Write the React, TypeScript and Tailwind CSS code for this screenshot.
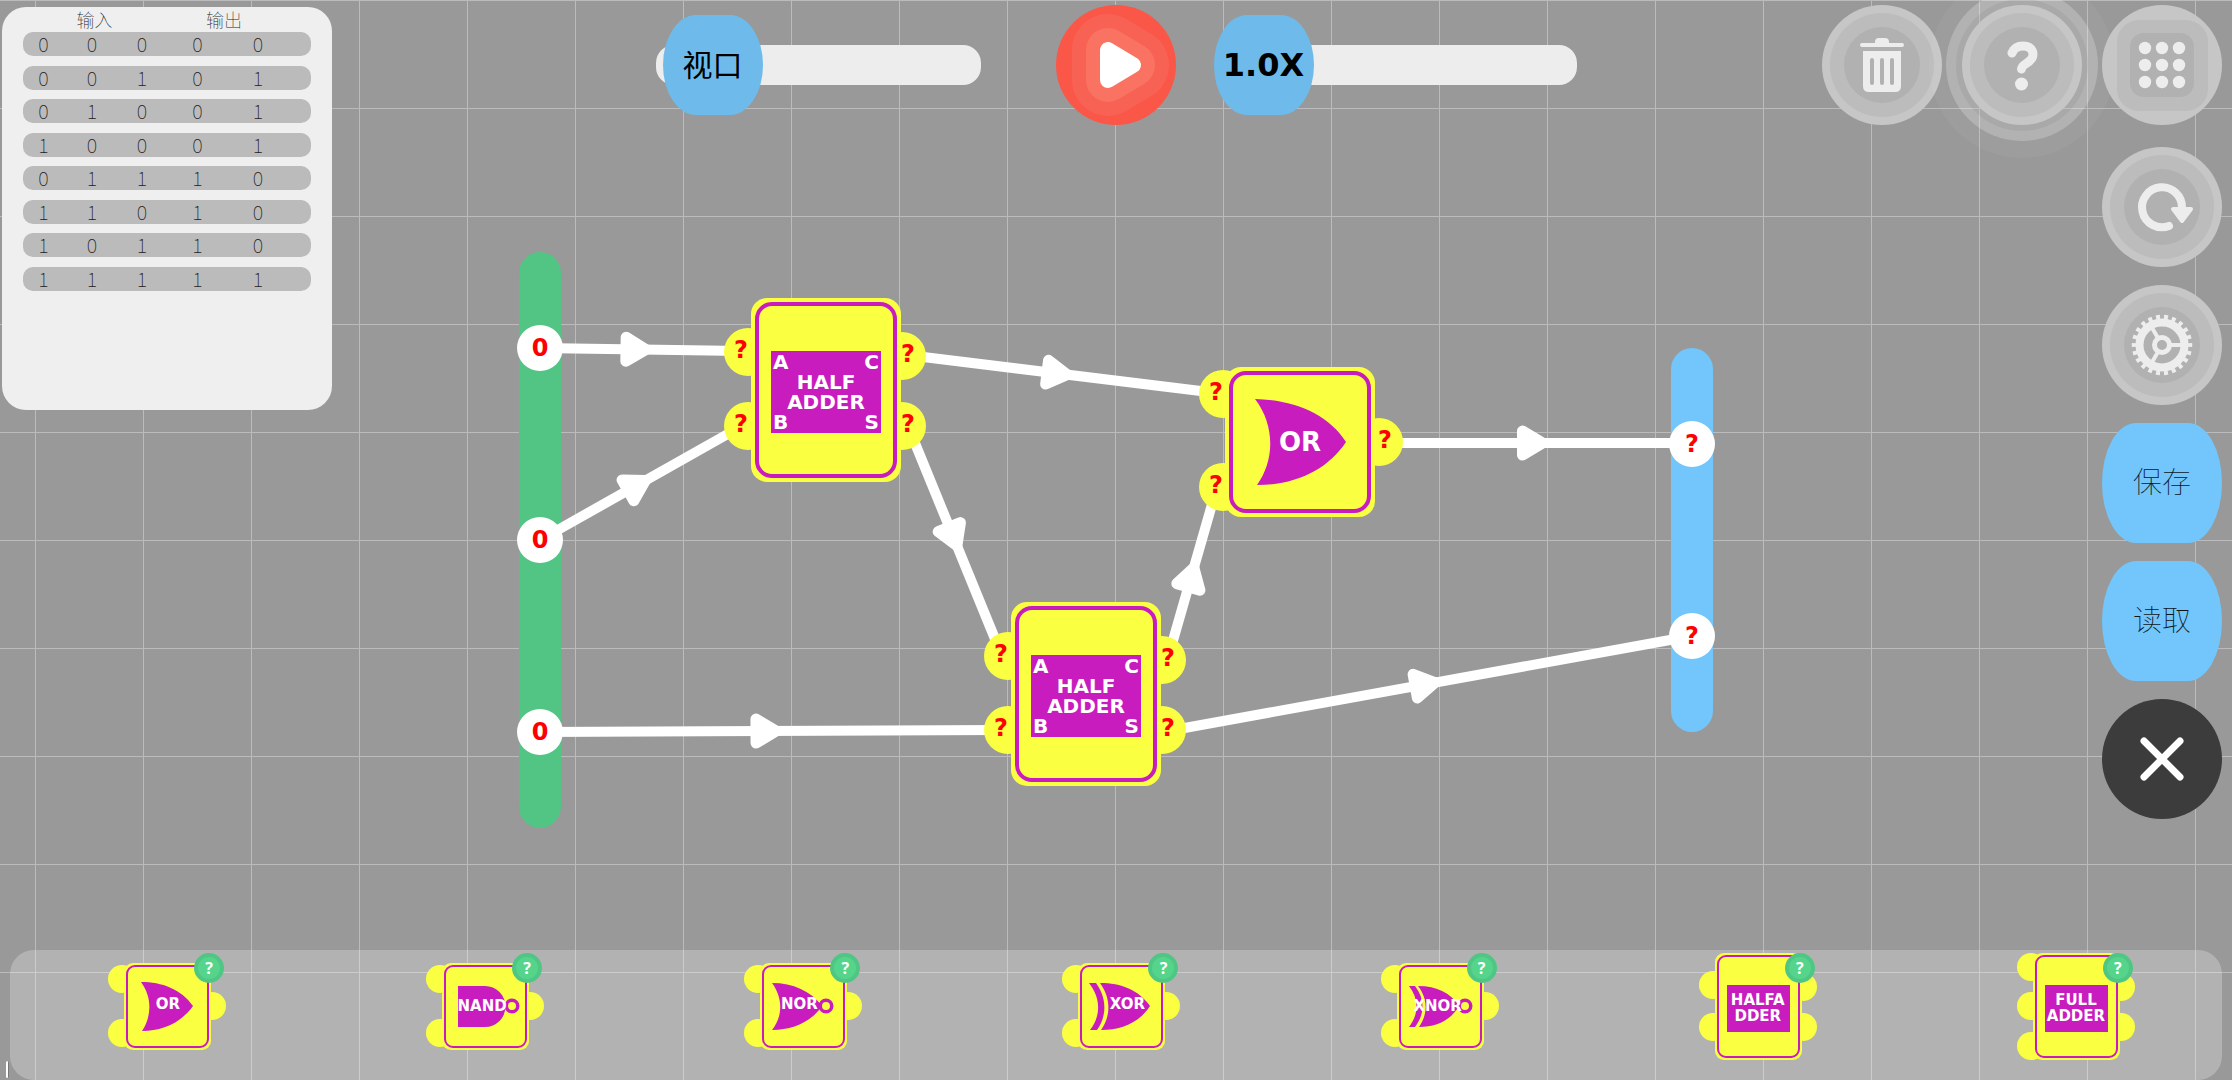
import React from "react";

const DISPLAY = "font-['DejaVu_Sans',sans-serif] font-bold";
const CJK = "font-['Noto_Sans_CJK_SC',sans-serif]";

/* ---------- truth table ---------- */

const TRUTH_ROWS = [
  [0, 0, 0, 0, 0],
  [0, 0, 1, 0, 1],
  [0, 1, 0, 0, 1],
  [1, 0, 0, 0, 1],
  [0, 1, 1, 1, 0],
  [1, 1, 0, 1, 0],
  [1, 0, 1, 1, 0],
  [1, 1, 1, 1, 1],
];
const COLUMN_WIDTHS = ["w-[41px]", "w-14", "w-11", "w-[67px]", "w-[54px]"];

function TruthTable() {
  return (
    <section className={`ml-0.5 mt-[7px] h-[403px] w-[330px] rounded-[24px] bg-[#efefef] px-[21px] ${CJK}`}>
      <table className="block text-[#1c1c1c]">
        <thead className="block">
          <tr className="flex h-[25px] text-lg leading-6">
            <th colSpan={3} className="w-[143px] text-center font-thin">输入</th>
            <th colSpan={2} className="w-[116px] text-center font-thin">输出</th>
          </tr>
        </thead>
        <tbody className="flex h-[259px] flex-col justify-between">
          {TRUTH_ROWS.map((row, r) => (
            <tr key={r} className="flex h-6 rounded-[10px] bg-[#bbbbbb] text-xl leading-6">
              {row.map((bit, c) => (
                <td key={c} className={`${COLUMN_WIDTHS[c]} text-center font-thin`}>{bit}</td>
              ))}
            </tr>
          ))}
        </tbody>
      </table>
    </section>
  );
}

/* ---------- sliders and round buttons ---------- */

const THUMB =
  "relative h-[100px] w-full appearance-none bg-transparent [&::-webkit-slider-thumb]:size-[100px] [&::-webkit-slider-thumb]:appearance-none [&::-webkit-slider-thumb]:rounded-[33px/50px] [&::-webkit-slider-thumb]:bg-[#6ebbeb]";

function ViewportSlider() {
  return (
    <label className="relative flex h-[100px] w-[325px] items-center pl-[7px]">
      <span className="absolute inset-x-0 h-10 rounded-[18px] bg-[#ededed]" />
      <input type="range" min={0} max={100} defaultValue={0} className={THUMB} />
      <span className={`pointer-events-none absolute w-[100px] pb-1 text-center text-[30px] leading-10 text-black ${CJK}`}>视口</span>
    </label>
  );
}

function SpeedSlider() {
  return (
    <label className="relative flex h-[100px] w-[363px] items-center">
      <span className="absolute left-10 right-0 h-10 rounded-[18px] bg-[#ededed]" />
      <input type="range" min={1} max={10} defaultValue={1} className={THUMB} />
      <span className={`pointer-events-none absolute w-[100px] text-center text-[32px] leading-10 text-black ${DISPLAY}`}>1.0X</span>
    </label>
  );
}

function PlayButton() {
  const tri = "M52 45V75L77 60Z";
  return (
    <button type="button" aria-label="Play" className="block size-[120px] rounded-full bg-[#fa5749]">
      <svg viewBox="0 0 120 120" strokeLinejoin="round">
        <path d={tri} fill="#f86255" stroke="#f86255" strokeWidth="72" />
        <path d={tri} fill="#fa7262" stroke="#fa7262" strokeWidth="44" />
        <path d={tri} fill="#fff" stroke="#fff" strokeWidth="16" />
      </svg>
    </button>
  );
}

function RoundButton({ label, square, halo, children }: { label: string; square?: boolean; halo?: boolean; children: React.ReactNode }) {
  return (
    <button
      type="button"
      aria-label={label}
      className={`block size-[120px] shrink-0 rounded-full bg-[#c6c6c6] ${
        halo ? "shadow-[0_0_0_6px_rgba(120,120,120,0.14),0_0_0_16px_rgba(255,255,255,0.22),0_0_0_33px_rgba(255,255,255,0.04)]" : ""
      }`}
    >
      <svg viewBox="0 0 120 120" fill="none">
        {square ? (
          <>
            <rect x="15" y="15" width="91" height="91" rx="22" fill="#bcbcbc" />
            <rect x="28" y="28" width="64" height="64" rx="14" fill="#b1b1b1" />
          </>
        ) : (
          <>
            <circle cx="60" cy="60" r="52" fill="#bcbcbc" />
            <circle cx="60" cy="60" r="38" fill="#b1b1b1" />
          </>
        )}
        {children}
      </svg>
    </button>
  );
}

const ICON = "#ededed";

function TrashButton() {
  return (
    <RoundButton label="Delete">
      <rect x="38" y="38" width="44" height="4" rx="2" fill={ICON} />
      <path d="M53 39V37Q53 33 57 33H63Q67 33 67 37V39Z" fill={ICON} />
      <path d="M41 46H79V81Q79 87 73 87H47Q41 87 41 81Z" fill={ICON} />
      <path d="M50 55V78M60 55V78M70 55V78" stroke="#b1b1b1" strokeWidth="4" strokeLinecap="round" />
    </RoundButton>
  );
}

function HelpButton() {
  return (
    <RoundButton label="Help" halo>
      <path d="M50 48C52 43 56 41 61 41C67 41 71 44 71 49.500C71 58 60 58 59.500 64" stroke={ICON} strokeWidth="9" strokeLinecap="round" />
      <circle cx="59.500" cy="79" r="6.500" fill={ICON} />
    </RoundButton>
  );
}

function MenuButton() {
  const at = [43, 60, 77];
  return (
    <RoundButton label="Menu" square>
      {at.map((y) => at.map((x) => <circle key={`${x}-${y}`} cx={x} cy={y} r="6.200" fill={ICON} />))}
    </RoundButton>
  );
}

function ResetButton() {
  return (
    <RoundButton label="Reset">
      <path d="M80 61A20 20 0 1 0 67 79" stroke={ICON} strokeWidth="8" strokeLinecap="round" />
      <path d="M71 62H89L80 74Z" fill={ICON} stroke={ICON} strokeWidth="4" strokeLinejoin="round" />
    </RoundButton>
  );
}

function SettingsButton() {
  return (
    <RoundButton label="Settings">
      <g stroke={ICON}>
        <circle cx="60" cy="60" r="22.500" strokeWidth="8" />
        <circle cx="60" cy="60" r="28" strokeWidth="4.500" pathLength="44" strokeDasharray="1 1" strokeDashoffset="0.5" />
        <circle cx="60" cy="60" r="7.500" strokeWidth="5" />
        <path d="M69 60H80M55.500 52.200L50 42.700M55.500 67.800L50 77.300" strokeWidth="4" />
      </g>
    </RoundButton>
  );
}

function TextButton({ children }: { children: string }) {
  return (
    <button type="button" className={`block size-[120px] shrink-0 rounded-[34px/60px] bg-[#72c6fb] pb-1 text-center text-[29px] font-thin text-[#0d151a] ${CJK}`}>
      {children}
    </button>
  );
}

function CloseButton() {
  return (
    <button type="button" aria-label="Close" className="block size-[120px] shrink-0 rounded-full bg-[#3c3c3c]">
      <svg viewBox="0 0 120 120" stroke="#fff" strokeWidth="7" strokeLinecap="round">
        <path d="M42 42L78 78M78 42L42 78" />
      </svg>
    </button>
  );
}

function Toolbar() {
  return (
    <nav className="mr-2.5 mt-[5px] flex items-start gap-5 justify-self-end">
      <TrashButton />
      <HelpButton />
      <div className="flex flex-col gap-[18px]">
        <div className="mb-1">
          <MenuButton />
        </div>
        <ResetButton />
        <SettingsButton />
        <TextButton>保存</TextButton>
        <TextButton>读取</TextButton>
        <CloseButton />
      </div>
    </nav>
  );
}

/* ---------- circuit canvas ---------- */

type Point = [number, number];

const WIRES: { from: Point; to: Point }[] = [
  { from: [540, 348], to: [742, 351] },
  { from: [540, 540], to: [742, 426] },
  { from: [907, 355], to: [1217, 393] },
  { from: [908, 426], to: [1002, 656] },
  { from: [1168, 658], to: [1217, 487] },
  { from: [1168, 731], to: [1692, 636] },
  { from: [540, 732], to: [1002, 730] },
  { from: [1383, 443], to: [1692, 443] },
];

function Wires() {
  return (
    <svg className="absolute left-0 top-0 overflow-visible" width="1" height="1">
      {WIRES.map(({ from, to }, i) => {
        const angle = (Math.atan2(to[1] - from[1], to[0] - from[0]) * 180) / Math.PI;
        const mx = (from[0] + to[0]) / 2;
        const my = (from[1] + to[1]) / 2;
        return (
          <g key={i} fill="#fff" stroke="#fff">
            <line x1={from[0]} y1={from[1]} x2={to[0]} y2={to[1]} strokeWidth="10" />
            <path transform={`translate(${mx} ${my}) rotate(${angle})`} d="M-15 -12V12L5 0Z" strokeWidth="11" strokeLinejoin="round" />
          </g>
        );
      })}
    </svg>
  );
}

function Rail({ className, values }: { className: string; values: string[] }) {
  return (
    <div className={`absolute flex w-[42px] flex-col items-center justify-around rounded-full ${className}`}>
      {values.map((value, i) => (
        <span key={i} className={`flex size-[46px] items-center justify-center rounded-full bg-white text-2xl text-[#ff0000] ${DISPLAY}`}>
          {value}
        </span>
      ))}
    </div>
  );
}

function BigPort({ className }: { className: string }) {
  return (
    <span className={`absolute flex size-12 items-center rounded-full bg-[#faff42] pb-1 text-2xl text-[#ff0000] ${DISPLAY} ${className}`}>?</span>
  );
}

function BigBody({ className, children }: { className: string; children: React.ReactNode }) {
  return (
    <div className={`relative w-[150px] rounded-[16px] bg-[#faff42] p-1 ${className}`}>
      <div className="relative flex size-full items-center justify-center rounded-[17px] border-4 border-[#c81cbe]">{children}</div>
    </div>
  );
}

function HalfAdderNode({ className }: { className: string }) {
  return (
    <div className={`absolute ${className}`}>
      <BigPort className="-left-[27px] top-[30px] pl-[10px]" />
      <BigPort className="-left-[27px] top-[104px] pl-[10px]" />
      <BigPort className="-right-[25px] top-[34px] justify-end pr-[11px]" />
      <BigPort className="-right-[25px] top-[104px] justify-end pr-[11px]" />
      <BigBody className="h-[184px]">
        <div className={`mt-1 flex h-[82px] w-[110px] shrink-0 flex-col justify-center bg-[#c81cbe] text-xl leading-5 text-white ${DISPLAY}`}>
          <p className="flex justify-between px-0.5"><span>A</span><span>C</span></p>
          <p className="text-center">HALF</p>
          <p className="text-center">ADDER</p>
          <p className="flex justify-between px-0.5"><span>B</span><span>S</span></p>
        </div>
      </BigBody>
    </div>
  );
}

function OrNode({ className }: { className: string }) {
  return (
    <div className={`absolute ${className}`}>
      <BigPort className="-left-[26px] top-[3px] pl-[10px]" />
      <BigPort className="-left-[26px] top-[96px] pl-[10px]" />
      <BigPort className="-right-[28px] top-[51px] justify-end pr-[11px]" />
      <BigBody className="h-[150px]">
        <svg viewBox="8 8 134 134" className="absolute inset-0 size-full" fill="#c81cbe">
          <path d="M30 32C70 33 103 47 121 75C103 102 72 118 32 118C50 93 50 58 30 32Z" />
        </svg>
        <span className={`relative text-[26px] leading-8 text-white ${DISPLAY}`}>OR</span>
      </BigBody>
    </div>
  );
}

function Canvas() {
  return (
    <div className="absolute inset-0 overflow-hidden">
      <div className="absolute left-[519px] top-[252px] h-[576px] w-[42px] rounded-full bg-[#52c483]" />
      <div className="absolute left-[1671px] top-[348px] h-[384px] w-[42px] rounded-full bg-[#72c6fb]" />
      <Wires />
      <Rail className="left-[519px] top-[252px] h-[576px]" values={["0", "0", "0"]} />
      <Rail className="left-[1671px] top-[348px] h-[384px]" values={["?", "?"]} />
      <HalfAdderNode className="left-[751px] top-[298px]" />
      <HalfAdderNode className="left-[1011px] top-[602px]" />
      <OrNode className="left-[1225px] top-[367px]" />
    </div>
  );
}

/* ---------- gate palette ---------- */

interface PaletteGate {
  name: string;
  lines: string[];
  block?: boolean;
  left: string[];
  right: string[];
  text: string;
  art?: React.ReactNode;
}

const RING = { r: 5.75, fill: "#faff42", stroke: "#c81cbe", strokeWidth: 3.5 };
const PAIR = ["top-[2px]", "top-[56px]"];
const MIDDLE = ["top-[29px]"];

const GATES: PaletteGate[] = [
  {
    name: "OR", lines: ["OR"], left: PAIR, right: MIDDLE, text: "left-[44px] top-[41px]",
    art: <path d="M17 19C38 19 57 26 69 43C57 60 38 68 18 68C28 53 28 34 17 19Z" />,
  },
  {
    name: "NAND", lines: ["NAND"], left: PAIR, right: MIDDLE, text: "left-[40px] top-[43px]",
    art: <><path d="M16 23H43A20 20 0 0 1 43 64H16Z" /><circle cx="70" cy="43" {...RING} /></>,
  },
  {
    name: "NOR", lines: ["NOR"], left: PAIR, right: MIDDLE, text: "left-[39px] top-[41px]",
    art: <><path d="M12 20C33 20 51 28 62 43C51 59 33 67 12 67C23 53 23 35 12 20Z" /><circle cx="66" cy="43" {...RING} /></>,
  },
  {
    name: "XOR", lines: ["XOR"], left: PAIR, right: MIDDLE, text: "left-[49px] top-[41px]",
    art: <><path d="M22 20C43 20 61 27 72 43C61 60 43 67 23 67C33 53 33 35 22 20Z" /><path d="M11 20H18C29 35 29 53 19 67H12C23 53 23 35 11 20Z" /></>,
  },
  {
    name: "XNOR", lines: ["XNOR"], left: PAIR, right: MIDDLE, text: "left-[41px] top-[43px]",
    art: <><path d="M21 23C40 23 54 30 62 43C54 57 40 64 22 64C31 51 31 36 21 23Z" /><path d="M12 23H18C28 36 28 51 18 64H12C22 51 22 36 12 23Z" /><circle cx="68" cy="43" {...RING} /></>,
  },
  {
    name: "HALF ADDER", lines: ["HALFA", "DDER"], block: true, text: "left-[43px] top-[55px]",
    left: ["top-[18px]", "top-[60px]"], right: ["top-[20px]", "top-[60px]"],
  },
  {
    name: "FULL ADDER", lines: ["FULL", "ADDER"], block: true, text: "left-[43px] top-[55px]",
    left: ["top-0", "top-[39px]", "top-[79px]"], right: ["top-[20px]", "top-[60px]"],
  },
];

function PaletteItem({ gate }: { gate: PaletteGate }) {
  return (
    <div className="relative">
      <button type="button" aria-label={gate.name} className={`relative block w-[87px] ${gate.block ? "h-[107px]" : "h-[87px]"}`}>
        {gate.left.map((top) => (
          <span key={top} className={`absolute -left-4 size-7 rounded-full bg-[#faff42] ${top}`} />
        ))}
        {gate.right.map((top) => (
          <span key={top} className={`absolute -right-[15px] size-7 rounded-full bg-[#faff42] ${top}`} />
        ))}
        <span className="absolute inset-0 rounded-[9px] bg-[#faff42] p-0.5">
          <span className="block size-full rounded-[9px] border-2 border-[#c81cbe]" />
        </span>
        {gate.block ? (
          <span className="absolute left-3 top-8 h-[47px] w-[63px] bg-[#c81cbe]" />
        ) : (
          <svg viewBox="0 0 87 87" className="absolute inset-0" fill="#c81cbe">{gate.art}</svg>
        )}
        <span className={`absolute -translate-x-1/2 -translate-y-1/2 whitespace-nowrap text-center text-[15px] leading-4 text-white ${DISPLAY} ${gate.text}`}>
          {gate.lines.map((line) => (
            <span key={line} className="block">{line}</span>
          ))}
        </span>
      </button>
      <button
        type="button"
        aria-label={`About ${gate.name}`}
        className={`absolute -right-[13px] flex size-[30px] items-center justify-center rounded-full border-4 border-[#50c684] bg-[#55d48c] font-['Open_Sans',sans-serif] text-base font-bold leading-4 text-white ${
          gate.block ? "top-0" : "-top-2.5"
        }`}
      >
        ?
      </button>
    </div>
  );
}

function Palette() {
  return (
    <footer className="relative mx-2.5 mt-auto flex h-[130px] items-center justify-between rounded-[24px] bg-white/25 pb-[17px] pl-[114px] pr-[102px]">
      {GATES.map((gate) => (
        <PaletteItem key={gate.name} gate={gate} />
      ))}
    </footer>
  );
}

export default function App() {
  return (
    <main className="relative flex min-h-screen flex-col overflow-hidden bg-[#999999] bg-[linear-gradient(to_right,#bbbbbb_1px,transparent_1px),linear-gradient(to_bottom,#bbbbbb_1px,transparent_1px)] bg-[size:108px_108px] bg-[position:35px_0px]">
      <Canvas />
      <header className="relative grid grid-cols-[1fr_auto_1fr] items-start">
        <TruthTable />
        <div className="mt-[5px] flex items-center">
          <ViewportSlider />
          <div className="ml-[75px] mr-[38px]">
            <PlayButton />
          </div>
          <SpeedSlider />
        </div>
        <Toolbar />
      </header>
      <Palette />
      <span className="absolute bottom-0.5 left-1.5 h-[17px] w-[3px] rounded-full border-r border-[#777777] bg-white" />
    </main>
  );
}
